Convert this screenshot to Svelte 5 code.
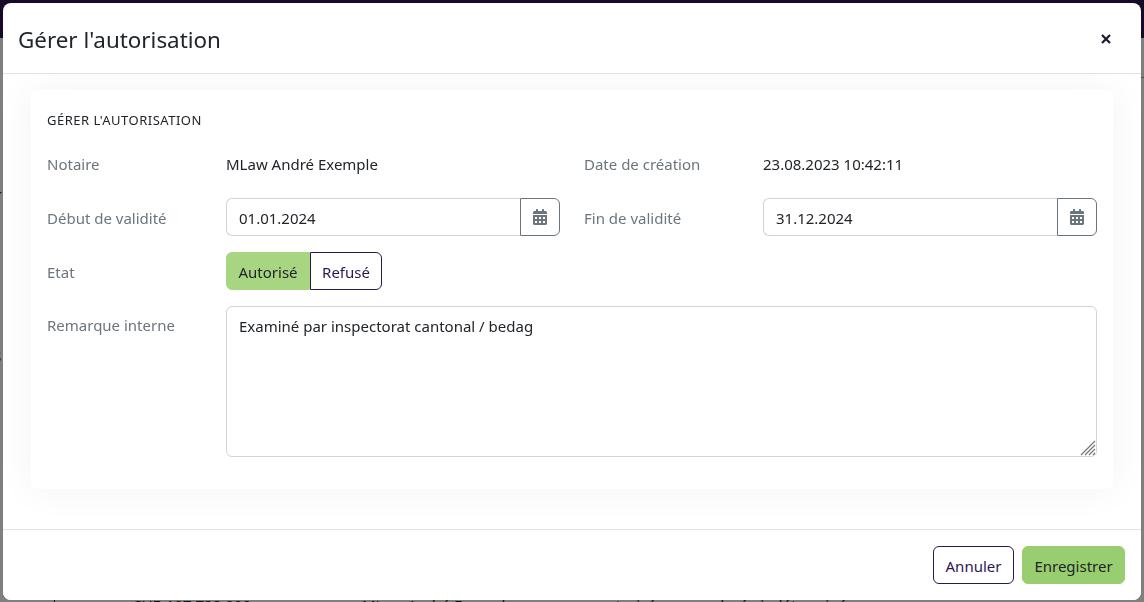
<script>
  const remark = 'Examiné par inspectorat cantonal / bedag';
</script>

<div class="page">
  <header class="nav"></header>
  <div class="side-frag first">T</div>
  <div class="side-frag second">S</div>
  <div class="rule"></div>
  <div class="vrule"></div>
  <div class="row">
    <span>CHE-107.722.000</span>
    <span>MLaw André Exemple</span>
    <span>autorisé</span>
    <span>durée indéterminée</span>
  </div>
</div>
<div class="backdrop"></div>

<section class="modal">
  <header class="modal-head">
    <h5>Gérer l'autorisation</h5>
    <button class="close" aria-label="Fermer">
      <svg viewBox="0 0 12 12" width="12" height="12"><path d="M2 2l8 8M10 2l-8 8" stroke="#1a1a2e" stroke-width="2.2" fill="none"/></svg>
    </button>
  </header>

  <div class="modal-body">
    <div class="card">
      <h6>Gérer l'autorisation</h6>
      <div class="form">
        <div class="field">
          <span class="label">Notaire</span>
          <span class="value">MLaw André Exemple</span>
        </div>
        <div class="field">
          <span class="label">Date de création</span>
          <span class="value">23.08.2023 10:42:11</span>
        </div>
        <div class="field">
          <span class="label">Début de validité</span>
          <div class="group">
            <input value="01.01.2024" />
            <button class="cal" aria-label="Calendrier">{@render calendar()}</button>
          </div>
        </div>
        <div class="field">
          <span class="label">Fin de validité</span>
          <div class="group">
            <input value="31.12.2024" />
            <button class="cal" aria-label="Calendrier">{@render calendar()}</button>
          </div>
        </div>
        <div class="field">
          <span class="label">Etat</span>
          <div class="toggle">
            <button class="on">Autorisé</button>
            <button class="off">Refusé</button>
          </div>
        </div>
        <div class="field wide">
          <span class="label">Remarque interne</span>
          <div class="area">
            <textarea value={remark}></textarea>
            <svg class="grip" viewBox="0 0 16 16" width="16" height="16" aria-hidden="true">
              <path d="M1 15L15 1M5 15L15 5M9 15L15 9M13 15L15 13" stroke="#777" stroke-width="1.2" fill="none"/>
            </svg>
          </div>
        </div>
      </div>
    </div>
  </div>

  <footer class="modal-foot">
    <button class="btn outline">Annuler</button>
    <button class="btn primary">Enregistrer</button>
  </footer>
</section>

{#snippet calendar()}
  <svg viewBox="0 0 448 512" width="14" height="16" fill="#6c757d"><path d="M0 464c0 26.5 21.5 48 48 48h352c26.5 0 48-21.5 48-48V192H0v272zm320-196c0-6.6 5.4-12 12-12h40c6.6 0 12 5.4 12 12v40c0 6.6-5.4 12-12 12h-40c-6.6 0-12-5.4-12-12v-40zm0 128c0-6.6 5.4-12 12-12h40c6.6 0 12 5.4 12 12v40c0 6.6-5.4 12-12 12h-40c-6.6 0-12-5.4-12-12v-40zM192 268c0-6.6 5.4-12 12-12h40c6.6 0 12 5.4 12 12v40c0 6.6-5.4 12-12 12h-40c-6.6 0-12-5.4-12-12v-40zm0 128c0-6.6 5.4-12 12-12h40c6.6 0 12 5.4 12 12v40c0 6.6-5.4 12-12 12h-40c-6.6 0-12-5.4-12-12v-40zM64 268c0-6.6 5.4-12 12-12h40c6.6 0 12 5.4 12 12v40c0 6.6-5.4 12-12 12H76c-6.6 0-12-5.4-12-12v-40zm0 128c0-6.6 5.4-12 12-12h40c6.6 0 12 5.4 12 12v40c0 6.6-5.4 12-12 12H76c-6.6 0-12-5.4-12-12v-40zM400 64h-48V16c0-8.8-7.2-16-16-16h-32c-8.8 0-16 7.2-16 16v48H160V16c0-8.8-7.2-16-16-16h-32c-8.8 0-16 7.2-16 16v48H48C21.5 64 0 85.5 0 112v48h448v-48c0-26.5-21.5-48-48-48z"/></svg>
{/snippet}

<style>
  :global(body) {
    margin: 0;
    overflow: hidden;
    font-family: "Noto Sans", "Open Sans", sans-serif;
    font-size: 15px;
    color: #212529;
  }
  .page {
    position: relative;
    width: 1144px;
    height: 602px;
    overflow: hidden;
    background: #fff;
  }
  .nav { height: 38px; background: #2f1550; }
  .side-frag { position: absolute; left: -7px; font-size: 15px; }
  .side-frag.first { top: 186px; }
  .side-frag.second { top: 346px; }
  .rule { position: absolute; left: 1141px; right: 0; top: 77px; height: 1px; background: #999; }
  .vrule { position: absolute; left: 54px; top: 596px; width: 1px; height: 6px; background: #333; }
  .row { position: absolute; top: 594px; left: 0; width: 1144px; height: 22px; line-height: 22px; }
  .row span { position: absolute; white-space: nowrap; }
  .row span:nth-child(1) { left: 132px; }
  .row span:nth-child(2) { left: 362px; }
  .row span:nth-child(3) { left: 598px; }
  .row span:nth-child(4) { left: 715px; }
  .backdrop { position: fixed; inset: 0; background: rgba(0,0,0,.5); }

  .modal {
    position: fixed;
    left: 3px;
    top: 3px;
    width: 1138px;
    height: 597px;
    background: #fff;
    border-radius: 8px;
    display: flex;
    flex-direction: column;
    overflow: hidden;
  }
  .modal-head {
    height: 71px;
    flex: none;
    box-sizing: border-box;
    border-bottom: 1px solid #dee2e6;
    display: flex;
    align-items: center;
    justify-content: space-between;
    padding: 2px 29px 0 16px;
  }
  h5 { margin: 0 0 0 -1px; font-size: 22.4px; font-weight: 400; color: #212529; }
  .close {
    border: 0; background: none; padding: 0; width: 12px; height: 12px; display: block;
    margin-top: -1px;
  }
  .close svg { display: block; }
  .modal-body {
    flex: 1;
    padding: 16px 28px 0;
    overflow: hidden;
  }
  .card {
    background: #fff;
    box-shadow: 0 0 40px rgba(0,0,0,.05);
    border-radius: 6px;
    padding: 16px 16px 32px;
    height: 399px;
    box-sizing: border-box;
  }
  h6 {
    margin: 0 0 10px;
    height: 28px;
    line-height: 28px;
    font-size: 13px;
    letter-spacing: .5px;
    font-weight: 400;
    text-transform: uppercase;
    color: #212529;
  }
  .form {
    display: grid;
    grid-template-columns: 513px 513px;
    column-gap: 24px;
    row-gap: 16px;
  }
  .field {
    display: grid;
    grid-template-columns: 179px 1fr;
    align-items: center;
    min-height: 38px;
  }
  .field.wide { grid-column: 1 / 3; align-items: start; }
  .field .label, .field .value { padding-top: 2px; }
  .field.wide .label { line-height: 38px; padding-top: 0; }
  .label { color: #6c757d; }
  .group { display: flex; height: 38px; }
  input {
    flex: 1;
    min-width: 0;
    box-sizing: border-box;
    border: 1px solid #ced4da;
    border-right: 0;
    border-radius: 6px 0 0 6px;
    padding: 2px 12px 0;
    font: inherit;
    color: #212529;
    outline: 0;
  }
  .cal {
    width: 40px;
    box-sizing: border-box;
    background: #fff;
    border: 1px solid #6c757d;
    border-radius: 0 6px 6px 0;
    padding: 0;
    display: flex;
    align-items: center;
    justify-content: center;
  }
  .toggle { display: flex; height: 38px; }
  .toggle button { font: inherit; padding: 2px 0 0; height: 38px; box-sizing: border-box; }
  .on { background: #a8d582; border: 1px solid #a8d582; color: #212529; border-radius: 6px 0 0 6px; width: 84px; }
  .off { background: #fff; border: 1px solid #2b1650; color: #2b1650; border-radius: 0 6px 6px 0; width: 72px; }
  .area { position: relative; height: 151px; }
  textarea {
    box-sizing: border-box;
    width: 100%;
    height: 151px;
    border: 1px solid #ced4da;
    border-radius: 6px;
    padding: 9px 12px;
    font: inherit;
    color: #212529;
    outline: 0;
    display: block;
    resize: none;
  }
  .grip { position: absolute; right: 1px; bottom: 1px; }
  .modal-foot {
    height: 71px;
    flex: none;
    box-sizing: border-box;
    border-top: 1px solid #dee2e6;
    display: flex;
    justify-content: flex-end;
    gap: 8px;
    padding: 16px;
    background: #fff;
    position: relative;
  }
  .btn { font: inherit; height: 38px; box-sizing: border-box; border-radius: 6px; padding: 2px 0 0; }
  .outline { width: 81px; background: #fff; border: 1px solid #2b1650; color: #2b1650; }
  .primary { width: 103px; background: #98ce6f; border: 1px solid #98ce6f; color: #212529; }
</style>
